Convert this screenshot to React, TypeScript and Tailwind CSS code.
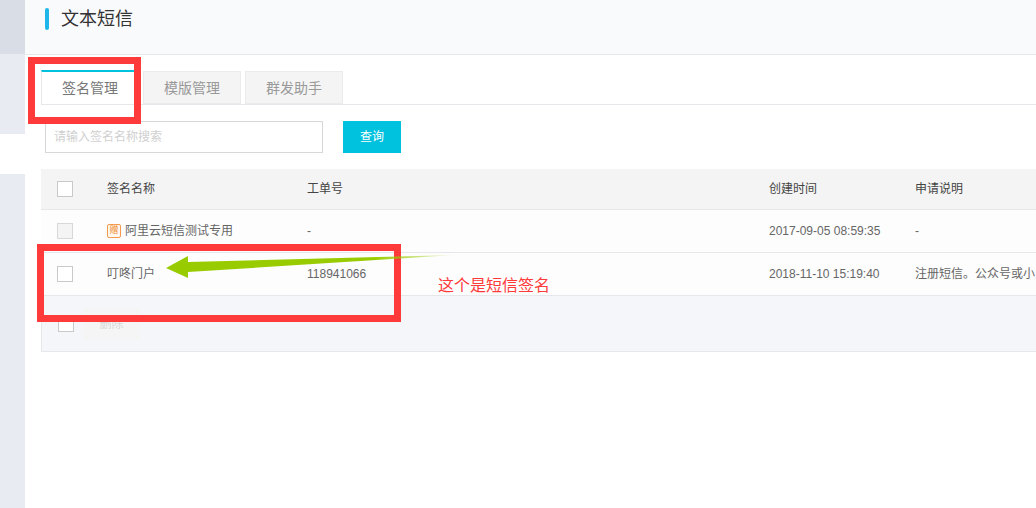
const font = { fontFamily: '"Liberation Sans", "Noto Sans CJK SC", sans-serif' };

const Check = ({ disabled = false }: { disabled?: boolean }) => (
  <span
    className={`block w-4 h-4 border ${disabled ? "border-[#d7d8d9] bg-[#f4f4f4]" : "border-[#c9c9c9] bg-white"}`}
  />
);

const Row = ({
  name,
  order,
  time,
  desc,
  gift = false,
  disabled = false,
}: {
  name: string;
  order: string;
  time: string;
  desc: string;
  gift?: boolean;
  disabled?: boolean;
}) => (
  <div className="flex items-center h-[43px] pl-4 bg-[#fdfdfd] border-b border-[#e6e7eb] text-xs text-[#666] whitespace-nowrap">
    <div className="w-[50px] shrink-0">
      <Check disabled={disabled} />
    </div>
    <div className="w-[200px] shrink-0 flex items-center gap-1 -mt-px">
      {gift && (
        <span className="flex items-center justify-center w-[14px] h-[14px] rounded-[2px] border border-[#f39b4b] bg-[#fff8f0] text-[9px] leading-none text-[#f08a2c]">
          赠
        </span>
      )}
      <span>{name}</span>
    </div>
    <div className="w-[462px] shrink-0 -mt-px">{order}</div>
    <div className="w-[146px] shrink-0 -mt-px">{time}</div>
    <div className="shrink-0 -mt-px">{desc}</div>
  </div>
);

export default function App() {
  return (
    <div className="relative flex w-screen h-screen overflow-hidden bg-white" style={font}>
      {/* left rail */}
      <div className="w-[25px] shrink-0 flex flex-col">
        <div className="h-[54px] bg-[#d8dde6]" />
        <div className="h-[80px] bg-[#e8ebf1]" />
        <div className="h-[40px] bg-white" />
        <div className="flex-1 bg-[#e8ebf1]" />
      </div>

      <div className="flex-1 min-w-0 overflow-hidden">
        {/* title bar */}
        <div className="h-[55px] pl-5 flex gap-3 bg-[#f9fafc] border-b border-[#e6e7eb]">
          <span className="block w-1 h-[22px] mt-2 rounded-[2px] bg-[#1fb6ea]" />
          <h1 className="mt-[9px] text-lg leading-[20px] text-[#333] font-normal">文本短信</h1>
        </div>

        {/* tabs */}
        <div className="mt-4 ml-4 flex items-end h-[34px] border-b border-[#e6e7eb] text-sm">
          <div className="w-[93px] h-[34px] pl-5 flex items-center border-t-2 border-l border-t-[#00c1de] border-l-[#e6e7eb] bg-white text-[#777]">
            签名管理
          </div>
          <div className="ml-[9px] w-[98px] h-[33px] flex items-center justify-center border border-[#ebebeb] bg-[#f4f4f4] text-[#999]">
            模版管理
          </div>
          <div className="ml-1 w-[98px] h-[33px] flex items-center justify-center border border-[#ebebeb] bg-[#f4f4f4] text-[#999]">
            群发助手
          </div>
        </div>

        {/* search */}
        <div className="mt-4 ml-5 flex">
          <div className="w-[278px] h-[32px] flex items-center px-2 border border-[#d7d8d9] text-xs text-[#d0d0d0]">
            请输入签名名称搜索
          </div>
          <div className="ml-5 w-[58px] h-[32px] flex items-center justify-center bg-[#00c1de] text-xs text-white">
            查询
          </div>
        </div>

        {/* table */}
        <div className="mt-4 ml-4">
          <div className="flex items-center h-[41px] pl-4 bg-[#f4f4f4] border-b border-[#e6e7eb] text-xs text-[#444] whitespace-nowrap">
            <div className="w-[50px] shrink-0">
              <Check />
            </div>
            <div className="w-[200px] shrink-0">签名名称</div>
            <div className="w-[462px] shrink-0">工单号</div>
            <div className="w-[146px] shrink-0">创建时间</div>
            <div className="shrink-0">申请说明</div>
          </div>
          <Row name="阿里云短信测试专用" order="-" time="2017-09-05 08:59:35" desc="-" gift disabled />
          <Row name="叮咚门户" order="118941066" time="2018-11-10 15:19:40" desc="注册短信。公众号或小" />
          <div className="flex items-center h-[56px] pl-4 bg-[#f4f6fa] border-b border-l border-[#e6e7eb]">
            <Check />
            <div className="ml-[9px] w-[57px] h-[32px] flex items-center justify-center bg-[#f5f5f5] text-xs text-[#d5d5d5]">
              删除
            </div>
          </div>
        </div>
      </div>

      {/* screenshot annotations */}
      <div className="absolute left-[28px] top-[57px] w-[113px] h-[67px] border-[7px] border-[#ff3a3a]" />
      <div className="absolute left-[37px] top-[244px] w-[364px] h-[78px] border-[7px] border-[#ff3a3a]" />
      <svg className="absolute left-[160px] top-[250px]" width="300" height="34" viewBox="0 0 300 34">
        <defs>
          <linearGradient id="fade" x1="6" y1="0" x2="295" y2="0" gradientUnits="userSpaceOnUse">
            <stop offset="0" stopColor="#99cc00" />
            <stop offset="0.72" stopColor="#99cc00" />
            <stop offset="1" stopColor="#99cc00" stopOpacity="0.1" />
          </linearGradient>
        </defs>
        <path d="M6 18 L28 6 L28 12 L295 5 L28 22 L28 28 Z" fill="url(#fade)" />
      </svg>
      <div className="absolute left-[438px] top-[277px] text-base leading-[18px] text-[#ff3a3a] whitespace-nowrap">
        这个是短信签名
      </div>
    </div>
  );
}
